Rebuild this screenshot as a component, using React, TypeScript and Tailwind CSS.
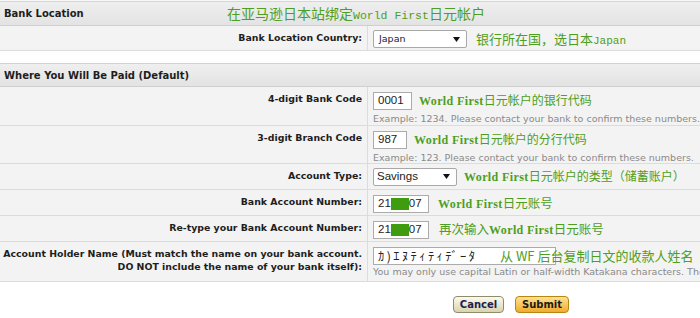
import React from 'react'

const lbl = "font-['DejaVu_Sans',sans-serif] font-bold text-[9.4px] leading-[13px] text-[#1e1e1e]"
const cjk = "font-['Noto_Sans_CJK_SC',sans-serif] text-[#4e9e22]"
const hint = "font-['DejaVu_Sans',sans-serif] text-[9.5px] leading-[12px] text-[#8a8a8a] whitespace-nowrap"

// bold serif latin used in the green notes
const WF = ({ children }: { children: React.ReactNode }) => (
  <span className="font-['Liberation_Serif',serif] font-bold text-[12px] tracking-[0.4px]">{children}</span>
)

const Arrow = () => (
  <svg width="7" height="5" viewBox="0 0 7 5" className="shrink-0">
    <polygon points="0,0 7,0 3.5,5" fill="#111" />
  </svg>
)

function Header({ title, note, h }: { title: string; note?: React.ReactNode; h: string }) {
  return (
    <div className={`flex items-center border-b border-[#cfcfcf] bg-gradient-to-b from-[#efefef] to-[#e3e3e3] pl-[4px] ${h}`}>
      <span className={`w-[223px] font-['DejaVu_Sans',sans-serif] font-bold text-[10px] text-[#1e1e1e] whitespace-nowrap`}>{title}</span>
      {note}
    </div>
  )
}

function Row({ h, label, pt, children }: { h: string; label: React.ReactNode; pt: string; children: React.ReactNode }) {
  return (
    <div className={`grid grid-cols-[368px_1fr] bg-[#f3f3f3] border-b border-[#dcdcdc] ${h}`}>
      <div className={`border-r border-[#dcdcdc] pr-[5px] pt-[5px] text-right whitespace-nowrap ${lbl}`}>{label}</div>
      <div className={`relative pl-[5px] min-w-0 overflow-hidden ${pt}`}>{children}</div>
    </div>
  )
}

const Box = ({ w, children }: { w: string; children: React.ReactNode }) => (
  <div className={`h-[18px] shrink-0 flex items-center border border-[#ababab] bg-white pl-[4px] font-['Liberation_Sans',sans-serif] text-[11.5px] text-[#222] ${w}`}>
    {children}
  </div>
)

export default function App() {
  return (
    <div className="w-[700px] h-[318px] overflow-hidden bg-white">
      <div className="h-[1px] bg-[#f8f8f8]" />
      <div className="border-t border-[#d6d6d6]">
        <Header
          title="Bank Location"
          h="h-[24px]"
          note={
            <span className={`${cjk} text-[14px] leading-none whitespace-nowrap pt-[1px]`}>
              在亚马逊日本站绑定<span className="font-['Liberation_Mono',monospace] text-[11.5px]">World First</span>日元帐户
            </span>
          }
        />
      </div>

      <Row h="h-[25px]" pt="pt-[3px]" label="Bank Location Country:">
        <div className="flex items-center">
          <div className="w-[94px] h-[18px] flex items-center justify-between rounded-[2px] border border-[#a8a8a8] bg-white pl-[5px] pr-[6px] font-['DejaVu_Sans',sans-serif] text-[9.5px] text-[#222]">
            Japan
            <Arrow />
          </div>
          <span className={`${cjk} ml-[9px] text-[13px] whitespace-nowrap`}>
            银行所在国，选日本<span className="font-['Liberation_Mono',monospace] text-[11px]">Japan</span>
          </span>
        </div>
      </Row>

      <div className="h-[13px] bg-white border-b border-[#d2d2d2]" />

      <Header title="Where You Will Be Paid (Default)" h="h-[23px]" />

      <Row h="h-[39px]" pt="pt-[4px]" label="4-digit Bank Code">
        <div className="flex items-center">
          <Box w="w-[39px]">0001</Box>
          <span className={`${cjk} ml-[7px] text-[12px] whitespace-nowrap`}>
            <WF>World First</WF>日元帐户的银行代码
          </span>
        </div>
        <div className={`${hint} mt-[3px]`}>Example: 1234. Please contact your bank to confirm these numbers.</div>
      </Row>

      <Row h="h-[38px]" pt="pt-[4px]" label="3-digit Branch Code">
        <div className="flex items-center">
          <Box w="w-[34px]">987</Box>
          <span className={`${cjk} ml-[7px] text-[12px] whitespace-nowrap`}>
            <WF>World First</WF>日元帐户的分行代码
          </span>
        </div>
        <div className={`${hint} mt-[3px]`}>Example: 123. Please contact your bank to confirm these numbers.</div>
      </Row>

      <Row h="h-[26px]" pt="pt-[3px]" label="Account Type:">
        <div className="flex items-center">
          <div className="w-[84px] h-[18px] flex items-center justify-between rounded-[2px] border border-[#a8a8a8] bg-white pl-[3px] pr-[6px] font-['Liberation_Sans',sans-serif] text-[11.5px] text-[#222]">
            Savings
            <Arrow />
          </div>
          <span className={`${cjk} ml-[7px] text-[12px] whitespace-nowrap`}>
            <WF>World First</WF>日元帐户的类型（储蓄账户）
          </span>
        </div>
      </Row>

      <Row h="h-[26px]" pt="pt-[4px]" label="Bank Account Number:">
        <div className="flex items-center">
          <Box w="w-[56px]">
            21<span className="inline-block w-[18px] h-[12px] bg-[#3e9c0e]" />07
          </Box>
          <span className={`${cjk} ml-[9px] text-[12.5px] whitespace-nowrap`}>
            <WF>World First</WF>日元账号
          </span>
        </div>
      </Row>

      <Row h="h-[26px]" pt="pt-[4px]" label="Re-type your Bank Account Number:">
        <div className="flex items-center">
          <Box w="w-[56px]">
            21<span className="inline-block w-[18px] h-[12px] bg-[#3e9c0e]" />07
          </Box>
          <span className={`${cjk} ml-[10px] text-[12.5px] whitespace-nowrap`}>
            再次输入<WF>World First</WF>日元账号
          </span>
        </div>
      </Row>

      <Row
        h="h-[40px]"
        pt="pt-[5px]"
        label={
          <>
            Account Holder Name (Must match the name on your bank account.
            <br />
            DO NOT include the name of your bank itself):
          </>
        }
      >
        <div className="w-[183px] h-[18px] flex items-center border border-[#ababab] bg-white pl-[4px] font-['Noto_Sans_CJK_JP',sans-serif] text-[12.5px] tracking-[2.4px] text-[#222] whitespace-nowrap">
          ｶ)ｴﾇﾃｨﾃｨﾃﾞｰﾀ
        </div>
        {/* pasted-on note overlaps the input */}
        <span className={`${cjk} absolute left-[132px] top-[5px] text-[13px] leading-[18px] whitespace-nowrap`}>
          从 WF 后台复制日文的收款人姓名
        </span>
        <div className={`${hint} mt-[1px]`}>You may only use capital Latin or half-width Katakana characters. The</div>
      </Row>

      <div className="flex gap-[11px] pl-[453px] mt-[14px]">
        <button className="w-[51px] h-[17px] rounded-[4px] border border-[#8e8c6c] bg-gradient-to-b from-[#fcfaee] to-[#d9d3ae] font-['DejaVu_Sans',sans-serif] font-bold text-[10px] leading-none text-[#1c2152]">
          Cancel
        </button>
        <button className="w-[54px] h-[17px] rounded-[4px] border border-[#b98512] bg-gradient-to-b from-[#fee28e] to-[#f1ab24] font-['DejaVu_Sans',sans-serif] font-bold text-[10px] leading-none text-[#1f1a10]">
          Submit
        </button>
      </div>
    </div>
  )
}
